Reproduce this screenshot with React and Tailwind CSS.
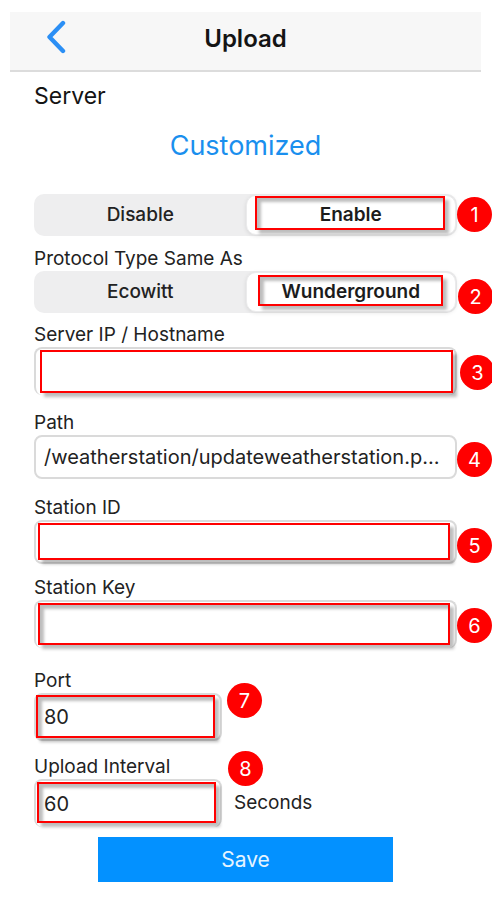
import { useState } from "react";

const outerShadow = "shadow-[4px_4px_3px_rgba(0,0,0,0.26)]";
const bothShadow =
  "shadow-[4px_4px_3px_rgba(0,0,0,0.26),inset_4px_4px_3px_rgba(0,0,0,0.26)]";

function Highlight({ className, inner }) {
  return (
    <span
      aria-hidden="true"
      className={`pointer-events-none absolute border-2 border-[#ff0000] ${inner ? bothShadow : outerShadow} ${className}`}
    />
  );
}

function Badge({ n, className }) {
  return (
    <span
      className={`absolute flex size-[35px] items-center justify-center rounded-full bg-[#ff0000] text-xl leading-6 text-white ${className}`}
    >
      {n}
    </span>
  );
}

function Segmented({ label, options, value, onChange, children }) {
  return (
    <div role="group" aria-label={label} className="relative grid h-[42px] grid-cols-2 rounded-[10px] bg-[#eeeeef] p-px">
      {options.map((option) => (
        <button
          key={option}
          type="button"
          aria-pressed={value === option}
          onClick={() => onChange(option)}
          className={
            value === option
              ? "rounded-[10px] border border-[#ebebec] bg-white text-[19px] font-semibold text-[#1c1c1c] shadow-[0_1px_4px_rgba(0,0,0,0.1)]"
              : "text-[19px] font-medium text-[#222222]"
          }
        >
          {option}
        </button>
      ))}
      {children}
    </div>
  );
}

function Field({ id, label, value, cut, narrow, children }) {
  return (
    <div className="flex flex-col">
      <label htmlFor={id} className="text-[19px] leading-6">
        {label}
      </label>
      <div className={narrow ? "relative w-[188px]" : "relative"}>
        <input
          id={id}
          type="text"
          defaultValue={value}
          className={`block w-full rounded-lg border-2 border-[#dadada] bg-white px-2 text-xl text-ellipsis text-[#222222] outline-none ${
            cut ? "h-12 border-b-0" : narrow ? "h-12" : "h-11"
          }`}
        />
        {children}
      </div>
    </div>
  );
}

export default function App() {
  const [mode, setMode] = useState("Enable");
  const [protocol, setProtocol] = useState("Wunderground");

  return (
    <div className="overflow-x-clip bg-white py-3 pr-[11px] pl-[10px] font-['Inter',sans-serif] text-[#222222]">
      <header className="grid h-[60px] grid-cols-[1fr_auto_1fr] items-center border-b-2 border-[#dcdcdc] bg-[#f7f7f7] px-9 pb-1">
        <button type="button" aria-label="Back" className="w-5 pb-1">
          <svg viewBox="0 0 20 34" className="h-[34px] w-5" fill="none" stroke="#2b8ff5" strokeWidth="4.4" strokeLinecap="round" strokeLinejoin="round">
            <path d="M17 3 L3.5 17 L17 31" />
          </svg>
        </button>
        <h1 className="text-2xl font-semibold text-[#141414]">Upload</h1>
      </header>

      <form className="flex flex-col gap-2.5 px-6" onSubmit={(e) => e.preventDefault()}>
        <div className="flex flex-col gap-4 pt-2 pb-5">
          <h2 className="text-[23px] leading-8 text-[#141414]">Server</h2>
          <button type="button" className="self-center text-[27px] leading-9 text-[#1a8fee]">
            Customized
          </button>
        </div>

        <Segmented label="Server state" options={["Disable", "Enable"]} value={mode} onChange={setMode}>
          <Highlight inner className="top-0.5 right-3 bottom-1.5 left-[221px]" />
          <Badge n={1} className="top-[3px] -right-[35px]" />
        </Segmented>

        <div className="flex flex-col pt-px">
          <p className="text-[19px] leading-6">Protocol Type Same As</p>
          <Segmented label="Protocol Type Same As" options={["Ecowitt", "Wunderground"]} value={protocol} onChange={setProtocol}>
            <Highlight inner className="top-1 right-3.5 bottom-[7px] left-[224px]" />
            <Badge n={2} className="top-2 -right-9" />
          </Segmented>
        </div>

        <Field id="host" label="Server IP / Hostname" value="" cut>
          <Highlight className="top-[3px] right-1 bottom-0.5 left-1.5" />
          <Badge n={3} className="top-2 -right-[38px]" />
        </Field>

        <div className="pt-1.5">
          <Field id="path" label="Path" value="/weatherstation/updateweatherstation.php?">
            <Badge n={4} className="top-[7px] -right-[35px]" />
          </Field>
        </div>

        <div className="pt-[7px]">
          <Field id="station-id" label="Station ID" value="">
            <Highlight className="top-[3px] right-[7px] bottom-1 left-1" />
            <Badge n={5} className="top-2 -right-[35px]" />
          </Field>
        </div>

        <div className="pt-0.5">
          <Field id="station-key" label="Station Key" value="" cut>
            <Highlight inner className="top-[3px] right-[7px] bottom-[3px] left-1" />
            <Badge n={6} className="top-2 -right-[35px]" />
          </Field>
        </div>

        <div className="pt-[11px]">
          <Field id="port" label="Port" value="80" narrow>
            <Highlight inner className="top-0.5 right-[7px] bottom-[3px] left-0.5" />
            <Badge n={7} className="-top-2.5 -right-10" />
          </Field>
        </div>

        <div className="flex items-end gap-3 pt-1">
          <Field id="interval" label="Upload Interval" value="60" narrow cut>
            <Highlight inner className="top-[3px] right-1.5 bottom-1 left-[3px]" />
            <Badge n={8} className="-top-7 -right-[41px]" />
          </Field>
          <span className="text-[19px] leading-[48px]">Seconds</span>
        </div>

        <button type="submit" className="h-[45px] w-[295px] self-center bg-[#0391ff] text-[21px] text-[#e6f4ff]">
          Save
        </button>
      </form>
    </div>
  );
}
